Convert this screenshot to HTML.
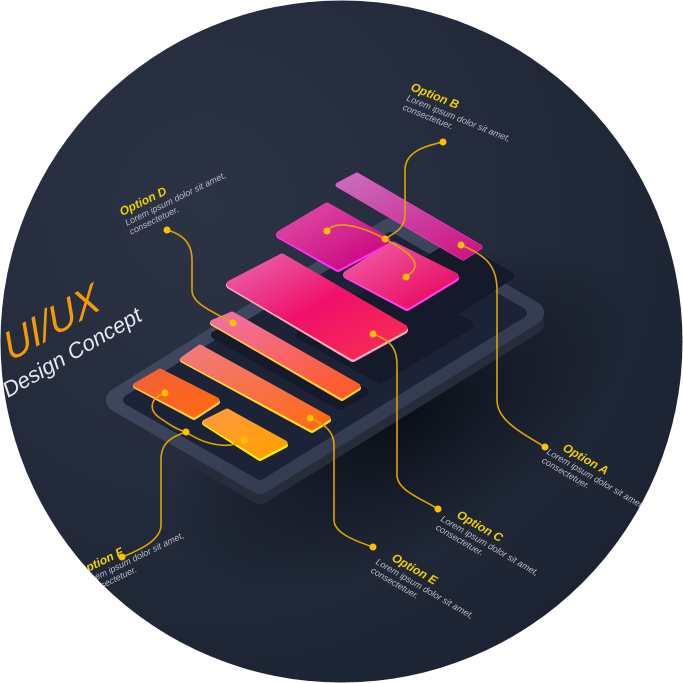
<!DOCTYPE html>
<html><head><meta charset="utf-8"><style>
html,body{margin:0;padding:0;background:#fff;width:683px;height:683px;overflow:hidden}
svg{display:block}
text{font-family:"Liberation Sans",sans-serif}
.t{fill:#f2d000;font-weight:bold;font-style:italic;font-size:12px}
.l{fill:#b8bcc6;font-style:italic;font-size:9px}
</style></head><body>
<svg width="683" height="683" viewBox="0 0 683 683" xmlns="http://www.w3.org/2000/svg">
<defs>
<radialGradient id="bg" cx="0.3" cy="0.3" r="0.9">
<stop offset="0" stop-color="#2b3345"/><stop offset="0.6" stop-color="#212939"/><stop offset="1" stop-color="#1a2130"/>
</radialGradient>
<radialGradient id="sh" cx="0.5" cy="0.5" r="0.5">
<stop offset="0" stop-color="#050810" stop-opacity="0.8"/><stop offset="1" stop-color="#050810" stop-opacity="0"/>
</radialGradient>
<clipPath id="c"><circle cx="341.5" cy="341.5" r="341"/></clipPath>
<linearGradient id="gA" x1="0" y1="0" x2="1" y2="1"><stop offset="0" stop-color="#f2603a"/><stop offset="1" stop-color="#ff6a10"/></linearGradient>
<linearGradient id="gB" x1="0" y1="0" x2="1" y2="1"><stop offset="0" stop-color="#ff9a40"/><stop offset="1" stop-color="#ffa000"/></linearGradient>
<linearGradient id="gC" x1="0" y1="0" x2="1" y2="1"><stop offset="0" stop-color="#f07a80"/><stop offset="1" stop-color="#ff6a10"/></linearGradient>
<linearGradient id="gD" x1="0" y1="0" x2="1" y2="1"><stop offset="0" stop-color="#f070a8"/><stop offset="1" stop-color="#ff5a20"/></linearGradient>
<linearGradient id="gE" x1="0" y1="0" x2="1" y2="1"><stop offset="0" stop-color="#e868b0"/><stop offset="0.5" stop-color="#f0106a"/><stop offset="1" stop-color="#f83050"/></linearGradient>
<linearGradient id="gF" x1="0" y1="0" x2="1" y2="1"><stop offset="0" stop-color="#e050a8"/><stop offset="1" stop-color="#c8007a"/></linearGradient>
<linearGradient id="gG" x1="0" y1="0" x2="1" y2="1"><stop offset="0" stop-color="#f060a8"/><stop offset="1" stop-color="#e8005a"/></linearGradient>
<linearGradient id="gH" x1="0" y1="0" x2="1" y2="1"><stop offset="0" stop-color="#c870c0"/><stop offset="1" stop-color="#d01080"/></linearGradient>
<linearGradient id="ph" x1="0" y1="0" x2="1" y2="1"><stop offset="0" stop-color="#47506a"/><stop offset="1" stop-color="#2c3346"/></linearGradient>
</defs>
<g clip-path="url(#c)">
<rect width="683" height="683" fill="url(#bg)"/>
<ellipse cx="400" cy="420" rx="260" ry="130" fill="url(#sh)" transform="rotate(-30 400 420)"/>
<!-- phone -->
<polygon points="118,410 390,240 532,323 260,492" fill="#262c3c" stroke="#262c3c" stroke-width="24" stroke-linejoin="round"/>
<polygon points="118,400 390,230 532,313 260,482" fill="url(#ph)" stroke="url(#ph)" stroke-width="24" stroke-linejoin="round"/>
<polygon points="128,400 390,237 522,313 260,475" fill="#1c2336" stroke="#1c2336" stroke-width="10" stroke-linejoin="round"/>
<polygon points="300,335 390,280 470,325 380,380" fill="#141a2a" stroke="#141a2a" stroke-width="8" stroke-linejoin="round"/>
<polygon points="395,280 455,243 510,276 455,312" fill="#141a2a" stroke="#141a2a" stroke-width="8" stroke-linejoin="round"/>
<polygon points="215,335 240,322 365,392 340,406" fill="#141a2a" stroke="#141a2a" stroke-width="8" stroke-linejoin="round"/>
<!-- bars -->
<g stroke-linejoin="round">
<polygon points="338,185 357,175 480,247 463,258" fill="url(#gH)" stroke="#ff40e0" stroke-width="5"/>
<polygon points="338,185 357,175 480,247 463,258" fill="url(#gH)" stroke="url(#gH)" stroke-width="4"/>
<polygon points="280,235 327,207 387,242 338,268" fill="#ff30ff" stroke="#ff30ff" stroke-width="8"/>
<polygon points="280,234 327,206 387,240 338,266" fill="url(#gF)" stroke="url(#gF)" stroke-width="7"/>
<polygon points="347,275 393,246 455,278 407,307" fill="#ff40f0" stroke="#ff40f0" stroke-width="8"/>
<polygon points="347,274 393,245 455,276 407,305" fill="url(#gG)" stroke="url(#gG)" stroke-width="7"/>
<polygon points="230,285 282,258 404,330 353,358" fill="#ffb0c0" stroke="#ffb0c0" stroke-width="8"/>
<polygon points="230,284 282,257 404,328 353,356" fill="url(#gE)" stroke="url(#gE)" stroke-width="7"/>
<polygon points="213,323 232,315 358,388 342,398" fill="#ffd040" stroke="#ffd040" stroke-width="6"/>
<polygon points="213,322 232,314 358,386 342,396" fill="url(#gD)" stroke="url(#gD)" stroke-width="5"/>
<polygon points="183,360 200,348 328,420 312,430" fill="#ffe030" stroke="#ffe030" stroke-width="6"/>
<polygon points="183,359 200,347 328,418 312,428" fill="url(#gC)" stroke="url(#gC)" stroke-width="5"/>
<polygon points="136,386 160,372 217,402 194,417" fill="#ffd040" stroke="#ffd040" stroke-width="6"/>
<polygon points="136,385 160,371 217,400 194,415" fill="url(#gA)" stroke="url(#gA)" stroke-width="5"/>
<polygon points="205,423 227,412 285,445 260,458" fill="#fff000" stroke="#fff000" stroke-width="6"/>
<polygon points="205,422 227,411 285,443 260,456" fill="url(#gB)" stroke="url(#gB)" stroke-width="5"/>
</g>
<!-- lines -->
<g fill="none" stroke="#e0a400" stroke-width="1.6">
<path d="M167,230 C185,235 192,245 192,260 L192,290 C192,302 205,308 233,323"/>
<path d="M443,142 C430,145 405,150 405,170 L405,215 C405,228 395,233 385,239"/>
<path d="M327,231 C335,220 360,225 385,239 C400,248 430,262 406,277"/>
<path d="M461,245 C485,255 497,265 497,290 L497,400 C497,420 520,432 545,447"/>
<path d="M373,334 C390,340 397,348 397,365 L397,475 C397,490 420,498 438,509"/>
<path d="M310,418 C325,424 334,432 334,445 L334,520 C334,532 352,540 373,547"/>
<path d="M165,393 C150,398 148,410 160,418 C170,425 178,430 186,432 C205,445 230,450 244,440"/>
<path d="M186,432 C168,438 161,445 161,460 L161,525 C161,540 140,550 122,557"/>
</g>
<g fill="#ffc000">
<circle cx="167" cy="230" r="3.5"/><circle cx="233" cy="323" r="3.5"/><circle cx="443" cy="142" r="3.5"/>
<circle cx="385" cy="239" r="3.5"/><circle cx="327" cy="231" r="3.5"/><circle cx="406" cy="277" r="3.5"/>
<circle cx="461" cy="245" r="3.5"/><circle cx="545" cy="447" r="3.5"/><circle cx="373" cy="334" r="3.5"/>
<circle cx="438" cy="509" r="3.5"/><circle cx="310" cy="418" r="3.5"/><circle cx="373" cy="547" r="3.5"/>
<circle cx="165" cy="393" r="3.5"/><circle cx="186" cy="432" r="3.5"/><circle cx="244" cy="440" r="3.5"/>
<circle cx="122" cy="557" r="3.5"/>
</g>
<!-- texts -->
<g transform="translate(10,362) rotate(-30) skewX(-10)">
<text x="0" y="0" font-size="40" fill="#f59a00" font-style="italic">UI/UX</text>
</g>
<g transform="translate(8,398) rotate(-30)">
<text x="0" y="0" font-size="22" fill="#e8e8ee" font-style="italic">Design Concept</text>
</g>
<g transform="translate(122,216) rotate(-26)">
<text class="t" x="0" y="0">Option D</text>
<text class="l" x="0" y="11">Lorem ipsum dolor sit amet,</text>
<text class="l" x="0" y="21">consectetuer.</text>
</g>
<g transform="translate(410,90) rotate(22)">
<text class="t" x="0" y="0">Option B</text>
<text class="l" x="0" y="11">Lorem ipsum dolor sit amet,</text>
<text class="l" x="0" y="21">consectetuer.</text>
</g>
<g transform="translate(562,450) rotate(30)">
<text class="t" x="0" y="0">Option A</text>
<text class="l" x="-12" y="11">Lorem ipsum dolor sit amet,</text>
<text class="l" x="-12" y="21">consectetuer.</text>
</g>
<g transform="translate(456,517) rotate(30)">
<text class="t" x="0" y="0">Option C</text>
<text class="l" x="-12" y="11">Lorem ipsum dolor sit amet,</text>
<text class="l" x="-12" y="21">consectetuer.</text>
</g>
<g transform="translate(391,560) rotate(30)">
<text class="t" x="0" y="0">Option E</text>
<text class="l" x="-12" y="11">Lorem ipsum dolor sit amet,</text>
<text class="l" x="-12" y="21">consectetuer.</text>
</g>
<g transform="translate(80,576) rotate(-26)">
<text class="t" x="0" y="0">Option F</text>
<text class="l" x="0" y="11">Lorem ipsum dolor sit amet,</text>
<text class="l" x="0" y="21">consectetuer.</text>
</g>
</g>
</svg>
</body></html>
